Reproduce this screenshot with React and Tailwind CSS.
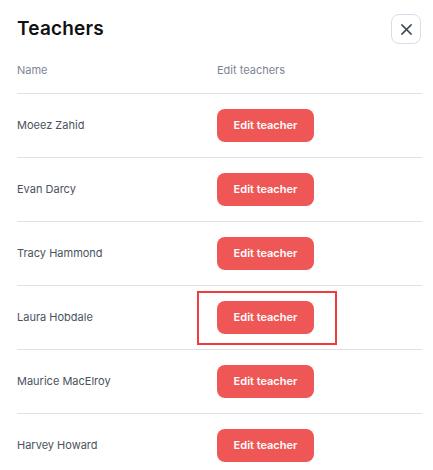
import React from 'react';

const teachers = [
  'Moeez Zahid',
  'Evan Darcy',
  'Tracy Hammond',
  'Laura Hobdale',
  'Maurice MacElroy',
  'Harvey Howard',
];

export default function App() {
  return (
    <div
      className="w-[433px] h-[470px] overflow-hidden bg-white pl-[17px] pr-[11px]"
      style={{ fontFamily: 'Inter, "Open Sans", sans-serif' }}
    >
      <div className="mt-[14px] flex h-[30px] items-center justify-between">
        <h1 className="text-[19px] font-semibold tracking-[0.2px] text-[#111111]">Teachers</h1>
        <button className="mr-[1px] flex h-[30px] w-[30px] items-center justify-center rounded-lg border border-[#d7deeb] text-[#3f4654]">
          <svg width="13" height="13" viewBox="0 0 14 14" fill="none" stroke="currentColor" strokeWidth="1.6" strokeLinecap="round">
            <path d="M2 2l10 10M12 2L2 12" />
          </svg>
        </button>
      </div>

      <div className="grid h-[49px] grid-cols-[200px_1fr] items-center pt-[3px] text-[11px] text-[#7d8594]">
        <span>Name</span>
        <span>Edit teachers</span>
      </div>

      {teachers.map((name, i) => (
        <div
          key={name}
          className="grid h-[64px] grid-cols-[200px_1fr] items-center border-t border-[#dde2ea] text-[11px] text-[#4b5260]"
        >
          <span>{name}</span>
          <div className="relative w-fit">
            <button className="h-[33px] w-[97px] rounded-lg bg-[#ef5656] text-[11px] font-semibold text-white">
              Edit teacher
            </button>
            {i === 3 && (
              <div className="pointer-events-none absolute -left-[20px] -right-[23px] -top-[10px] -bottom-[11px] border-2 border-[#f03c3c]" />
            )}
          </div>
        </div>
      ))}
    </div>
  );
}
